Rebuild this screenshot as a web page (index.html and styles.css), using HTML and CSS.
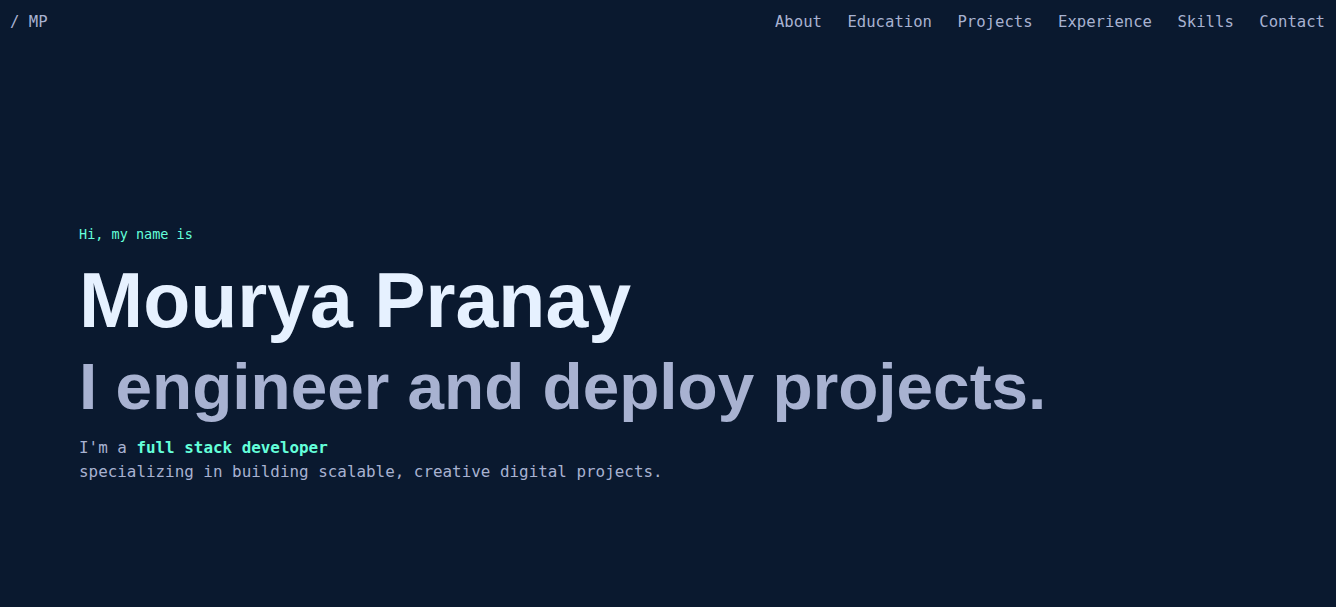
FILE: index.html
```html
<!DOCTYPE html>
<html lang="en">
<head>
<meta charset="utf-8">
<title>Mourya Pranay</title>
<link rel="stylesheet" href="styles.css">
</head>
<body>
<header class="header">
  <a class="logo" href="#">/ MP</a>
  <nav class="nav">
    <a href="#about">About</a>
    <a href="#education">Education</a>
    <a href="#projects">Projects</a>
    <a href="#experience">Experience</a>
    <a href="#skills">Skills</a>
    <a href="#contact">Contact</a>
  </nav>
</header>
<main class="hero">
  <p class="hi">Hi, my name is</p>
  <h1 class="name">Mourya Pranay</h1>
  <h2 class="tagline">I engineer and deploy projects.</h2>
  <p class="desc">I'm a <strong>full stack developer</strong><br>specializing in building scalable, creative digital projects.</p>
</main>
</body>
</html>
```
FILE: styles.css
```css
* { box-sizing: border-box; }
html, body {
  margin: 0;
  padding: 0;
  background: #0a192f;
  height: 100%;
}
body {
  font-family: "DejaVu Sans Mono", "Liberation Mono", monospace;
  color: #a8b2d1;
}
a { text-decoration: none; color: inherit; }
.header {
  display: flex;
  justify-content: space-between;
  align-items: center;
  height: 44px;
  padding: 0 11px 0 10px;
}
.logo {
  font-size: 15.6px;
  color: #a8b2d1;
}
.nav {
  display: flex;
  gap: 25.5px;
  font-size: 15.6px;
}
.nav a { color: #a8b2d1; }
.hero {
  padding: 180px 79px 0;
}
.hi {
  margin: 0;
  color: #64ffda;
  font-size: 13.5px;
  line-height: 20px;
}
.name {
  margin: 14px 0 0;
  font-family: "Liberation Sans", Arial, sans-serif;
  font-weight: 700;
  font-size: 77px;
  line-height: 84px;
  color: #e6f1ff;
}
.tagline {
  margin: 2px 0 0;
  font-family: "Liberation Sans", Arial, sans-serif;
  font-weight: 700;
  font-size: 65.7px;
  line-height: 86px;
  color: #a8b2d1;
}
.desc {
  margin: 6px 0 0;
  font-size: 15.9px;
  line-height: 24px;
  color: #a8b2d1;
}
.desc strong {
  color: #64ffda;
  font-weight: 700;
}
```
